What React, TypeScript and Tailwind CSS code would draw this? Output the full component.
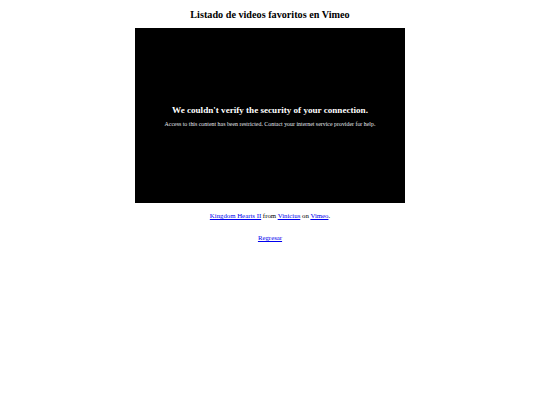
import React from "react";

const App = () => {
  return (
    <div className="w-[540px] h-[405px] bg-white text-black font-['Liberation_Serif',serif] flex flex-col items-center">
      <h2 className="mt-[8px] text-[10.2px] leading-[13px] font-bold">Listado de videos favoritos en Vimeo</h2>
      <div className="mt-[7px] w-[270px] h-[175px] bg-black text-white flex flex-col items-center pt-[76px]">
        <p className="text-[9.1px] leading-[12px] font-bold">We couldn't verify the security of your connection.</p>
        <p className="text-[5.9px] leading-[7px] mt-[5px] text-gray-200">
          Access to this content has been restricted. Contact your internet service provider for help.
        </p>
      </div>
      <p className="mt-[8px] text-[6.8px] leading-[9px]">
        <a href="#" className="text-[#0000ee] underline">Kingdom Hearts II</a> from{" "}
        <a href="#" className="text-[#0000ee] underline">Vinicius</a> on{" "}
        <a href="#" className="text-[#0000ee] underline">Vimeo</a>.
      </p>
      <p className="mt-[13px] text-[6.8px] leading-[9px]">
        <a href="#" className="text-[#0000ee] underline">Regresar</a>
      </p>
    </div>
  );
};

export default App;
